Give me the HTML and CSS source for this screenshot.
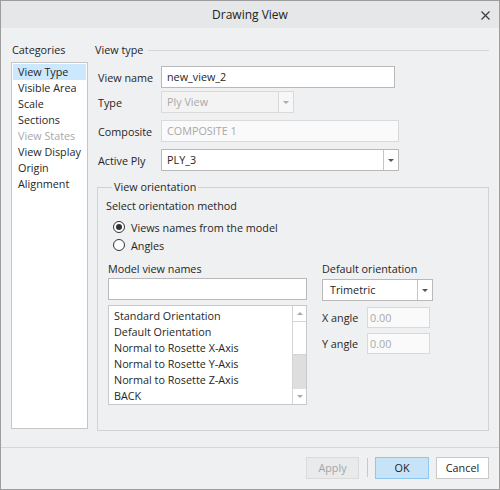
FILE: index.html
```html
<!DOCTYPE html>
<html>
<head>
<meta charset="utf-8">
<link rel="stylesheet" href="styles.css">
</head>
<body>
<div class="window">
  <div class="titlebar">
    <span class="title">Drawing View</span>
    <span class="close"><svg width="9" height="9" viewBox="0 0 9 9"><path d="M0.5 0.5 L8.5 8.5 M8.5 0.5 L0.5 8.5" stroke="#3c3c3c" stroke-width="1.2" fill="none"/></svg></span>
  </div>
  <div class="main">
    <div class="cats">
      <div class="cats-title">Categories</div>
      <ul class="cat-list">
        <li class="sel">View Type</li>
        <li>Visible Area</li>
        <li>Scale</li>
        <li>Sections</li>
        <li class="dis">View States</li>
        <li>View Display</li>
        <li>Origin</li>
        <li>Alignment</li>
      </ul>
    </div>
    <div class="content">
      <div class="section-head"><span>View type</span><span class="rule"></span></div>
      <div class="row r1"><span class="lbl">View name</span><div class="field w234">new_view_2</div></div>
      <div class="row r2"><span class="lbl">Type</span><div class="combo disabled w133"><span class="val">Ply View</span><span class="arrow"><i></i></span></div></div>
      <div class="row r3"><span class="lbl">Composite</span><div class="field disabled w238">COMPOSITE 1</div></div>
      <div class="row r4"><span class="lbl">Active Ply</span><div class="combo w238"><span class="val">PLY_3</span><span class="arrow"><i></i></span></div></div>
      <fieldset class="group">
        <legend>View orientation</legend>
        <div class="method">Select orientation method</div>
        <div class="radio r-first"><span class="circle on"></span><span>Views names from the model</span></div>
        <div class="radio r-second"><span class="circle"></span><span>Angles</span></div>
        <div class="cols">
          <div class="col-left">
            <div class="col-label">Model view names</div>
            <div class="field search"></div>
            <div class="listbox">
              <ul class="names">
                <li>Standard Orientation</li>
                <li>Default Orientation</li>
                <li>Normal to Rosette X-Axis</li>
                <li>Normal to Rosette Y-Axis</li>
                <li>Normal to Rosette Z-Axis</li>
                <li>BACK</li>
              </ul>
              <div class="scrollbar">
                <div class="sb-btn"><i class="up"></i></div>
                <div class="sb-thumb"></div>
                <div class="sb-track"></div>
                <div class="sb-btn"><i class="down"></i></div>
              </div>
            </div>
          </div>
          <div class="col-right">
            <div class="col-label">Default orientation</div>
            <div class="combo orient"><span class="val">Trimetric</span><span class="arrow"><i></i></span></div>
            <div class="angle a1"><span class="alabel">X angle</span><div class="field disabled ainput">0.00</div></div>
            <div class="angle a2"><span class="alabel">Y angle</span><div class="field disabled ainput">0.00</div></div>
          </div>
        </div>
      </fieldset>
    </div>
  </div>
  <div class="footer">
    <div class="btn apply">Apply</div>
    <div class="vsep"></div>
    <div class="btn ok">OK</div>
    <div class="btn cancel">Cancel</div>
  </div>
</div>
</body>
</html>
```
FILE: styles.css
```css
* { box-sizing: border-box; }
html, body { margin: 0; padding: 0; }
body {
  width: 500px;
  height: 490px;
  font-family: "Segoe UI", "Open Sans", "Noto Sans", sans-serif;
  font-size: 10.8px;
  color: #262626;
  background: #fff;
}
.window {
  width: 500px;
  height: 490px;
  border: 1px solid #9d9d9d;
  background: #eff0f1;
  display: flex;
  flex-direction: column;
}
.titlebar {
  height: 27px;
  flex: none;
  background: #e5e7e9;
  display: grid;
  grid-template-columns: 1fr auto 1fr;
  align-items: center;
}
.title {
  grid-column: 2;
  font-size: 12px;
  color: #222;
  line-height: 16px;
}
.close {
  grid-column: 3;
  justify-self: end;
  margin-right: 9px;
  display: flex;
  margin-top: 1px;
}
.main {
  height: 419px;
  flex: none;
  display: flex;
  padding: 14px 0 0 10px;
}
.cats { width: 77px; flex: none; }
.cats-title { line-height: 16px; height: 16px; padding-left: 1px; }
.cat-list {
  list-style: none;
  margin: 4px 0 0;
  padding: 1px 1px;
  height: 367px;
  border: 1px solid #c6c6c6;
  background: #fff;
}
.cat-list li {
  height: 16px;
  line-height: 16px;
  padding-left: 5px;
}
.cat-list li.sel { background: #cce8ff; }
.cat-list li.dis { color: #a8a8a8; }

.content { width: 394px; margin-left: 7px; flex: none; }
.section-head {
  height: 16px;
  line-height: 16px;
  display: flex;
  align-items: center;
}
.rule { flex: 1; height: 1px; background: #d6d6d6; margin-left: 5px; }

.row { display: flex; align-items: center; height: 22px; }
.r1 { margin-top: 8px; }
.r2 { margin-top: 3px; }
.r3 { margin-top: 7px; }
.r4 { margin-top: 7px; }
.lbl { width: 66px; padding-left: 3px; flex: none; }

.field {
  height: 22px;
  line-height: 20px;
  border: 1px solid #b9b9b9;
  background: #fff;
  padding-left: 5px;
}
.field.disabled { border-color: #d9d9d9; background: #fafafa; color: #a9a9a9; }
.w234 { width: 234px; }
.w238 { width: 238px; }
.w133 { width: 133px; }

.combo {
  height: 22px;
  border: 1px solid #b9b9b9;
  background: #fff;
  display: flex;
}
.combo .val { flex: 1; line-height: 20px; padding-left: 5px; }
.combo .arrow {
  width: 15px;
  border-left: 1px solid #c4c4c4;
  display: flex;
  align-items: center;
  justify-content: center;
}
.combo .arrow i {
  width: 0; height: 0;
  border-left: 3px solid transparent;
  border-right: 3px solid transparent;
  border-top: 3px solid #555;
}
.combo.disabled { border-color: #dadada; background: #f3f3f3; }
.combo.disabled .val { color: #a9a9a9; }
.combo.disabled .arrow { border-left-color: #dadada; background: #f7f7f7; }
.combo.disabled .arrow i { border-top-color: #aaa; }

.group {
  margin: 8px 0 0 2px;
  padding: 0;
  width: 392px;
  height: 252px;
  border: 1px solid #d2d2d2;
  min-width: 0;
}
.group legend {
  margin-left: 14px;
  padding: 0 2px;
  line-height: 16px;
}
.method { margin: 3px 0 0 8px; line-height: 16px; }
.radio { display: flex; align-items: center; height: 16px; margin-left: 15px; }
.r-first { margin-top: 5px; }
.r-second { margin-top: 2px; }
.circle {
  width: 12px; height: 12px;
  border: 1px solid #333;
  border-radius: 50%;
  background: #fff;
  margin-right: 6px;
  display: flex;
  align-items: center;
  justify-content: center;
}
.circle.on::after {
  content: "";
  width: 6px; height: 6px;
  border-radius: 50%;
  background: #333;
}
.cols { display: flex; margin-top: 8px; }
.col-left { width: 199px; margin-left: 10px; }
.col-right { width: 111px; margin-left: 15px; }
.col-label { line-height: 16px; height: 16px; }
.search { margin-top: 1px; width: 199px; }
.listbox {
  margin-top: 5px;
  height: 100px;
  border: 1px solid #c9c9c9;
  background: #fff;
  display: flex;
}
.names { list-style: none; margin: 0; padding: 2px 0 0 5px; flex: 1; }
.names li { height: 16px; line-height: 16px; }
.scrollbar {
  width: 14px;
  border-left: 1px solid #d4d4d4;
  display: flex;
  flex-direction: column;
}
.sb-btn { height: 15px; display: flex; align-items: center; justify-content: center; }
.sb-btn i { width: 0; height: 0; border-left: 3px solid transparent; border-right: 3px solid transparent; }
.sb-btn i.up { border-bottom: 3px solid #aaa; }
.sb-btn i.down { border-top: 3px solid #aaa; }
.sb-thumb { height: 34px; border-top: 1px solid #d4d4d4; border-bottom: 1px solid #d4d4d4; background: #fff; }
.sb-track { flex: 1; background: #dedede; }

.orient { margin-top: 2px; width: 111px; }
.orient .val { padding-left: 7px; }
.angle { display: flex; align-items: center; height: 21px; }
.a1 { margin-top: 6px; }
.a2 { margin-top: 5px; }
.alabel { width: 45px; }
.ainput { width: 63px; height: 21px; line-height: 19px; background: #fff; color: #b3b3b3; padding-left: 2px; }

.footer {
  flex: 1;
  border-top: 1px solid #d6d6d6;
  display: flex;
  justify-content: flex-end;
  align-items: flex-start;
  padding: 9px 10px 0 0;
}
.btn {
  height: 22px;
  line-height: 20px;
  text-align: center;
  border: 1px solid #c9c9c9;
  background: #fff;
}
.apply { width: 53px; background: #e9eaeb; border-color: #dadada; color: #a5a5a5; }
.vsep { width: 1px; height: 19px; margin: 1px 7px 0 8px; background: #c9c9c9; }
.ok { width: 54px; background: #c6e3f8; border-color: #8fc7ee; color: #222; margin-right: 7px; }
.cancel { width: 53px; color: #222; }
```
